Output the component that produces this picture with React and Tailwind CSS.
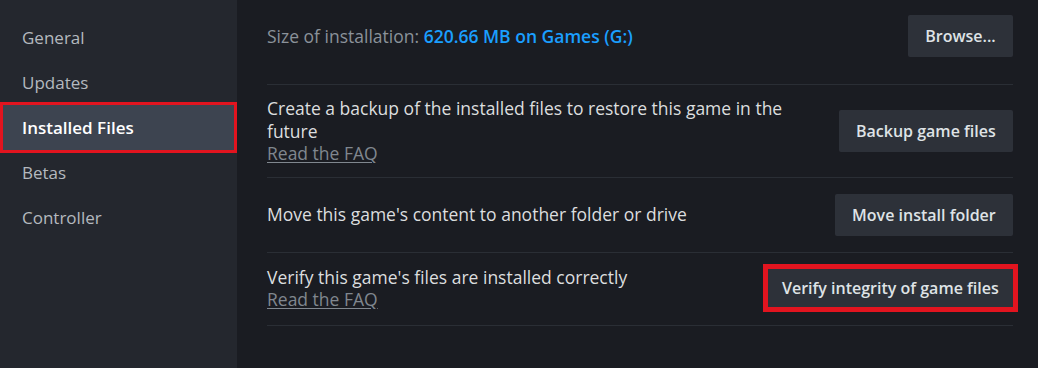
import React from 'react';

const navItems = ['General', 'Updates', 'Installed Files', 'Betas', 'Controller'];

const font = { fontFamily: '"Open Sans", "Noto Sans", sans-serif' };

const ActionButton = ({ children, highlighted }) => (
    <button
        className={`shrink-0 bg-[#2d3139] text-[#dfe3e6] text-[16px] font-semibold whitespace-nowrap
      ${highlighted ? 'h-[38px] px-[14px] outline-[5px] outline-solid outline-[#e2141f]' : 'h-[42px] px-[17px] rounded-[2px]'}
    `}
    >
        {children}
    </button>
);

const Faq = () => (
    <a className="text-[#80878f] underline underline-offset-2 decoration-[#80878f]">Read the FAQ</a>
);

export default function App() {
    return (
        <div className="flex w-[1038px] h-[368px] overflow-hidden bg-[#1a1c22]" style={font}>
            <nav className="w-[237px] shrink-0 bg-[#24272e] pt-[15px]">
                {navItems.map((item) => (
                    <div
                        key={item}
                        className={`h-[45px] flex items-center text-[17px]
              ${item === 'Installed Files'
                                ? 'mx-[3px] pl-[19px] bg-[#3d4450] text-white font-semibold outline-[3px] outline-solid outline-[#e2141f]'
                                : 'pl-[22px] text-[#b4b9bf]'}
            `}
                    >
                        {item}
                    </div>
                ))}
            </nav>

            <main className="flex-1 pl-[30px] pr-[27px] text-[17.5px] text-[#dcdedf]">
                <div className="flex items-center justify-between pt-[15px] pb-[27px] border-b border-[#2a2e35]">
                    <div>
                        <span className="text-[#8b929a]">Size of installation: </span>
                        <span className="text-[#1a9fff] font-semibold">620.66 MB on Games (G:)</span>
                    </div>
                    <ActionButton>Browse...</ActionButton>
                </div>

                <div className="flex items-center justify-between gap-8 py-[12px] border-b border-[#2a2e35] leading-[22.5px]">
                    <div className="w-[540px]">
                        <p>Create a backup of the installed files to restore this game in the future</p>
                        <Faq />
                    </div>
                    <ActionButton>Backup game files</ActionButton>
                </div>

                <div className="flex items-center justify-between gap-8 py-[16px] border-b border-[#2a2e35]">
                    <p>Move this game's content to another folder or drive</p>
                    <ActionButton>Move install folder</ActionButton>
                </div>

                <div className="flex items-center justify-between gap-8 pt-[13px] pb-[15px] border-b border-[#2a2e35] leading-[22px]">
                    <div>
                        <p>Verify this game's files are installed correctly</p>
                        <Faq />
                    </div>
                    <ActionButton highlighted>Verify integrity of game files</ActionButton>
                </div>
            </main>
        </div>
    );
}
